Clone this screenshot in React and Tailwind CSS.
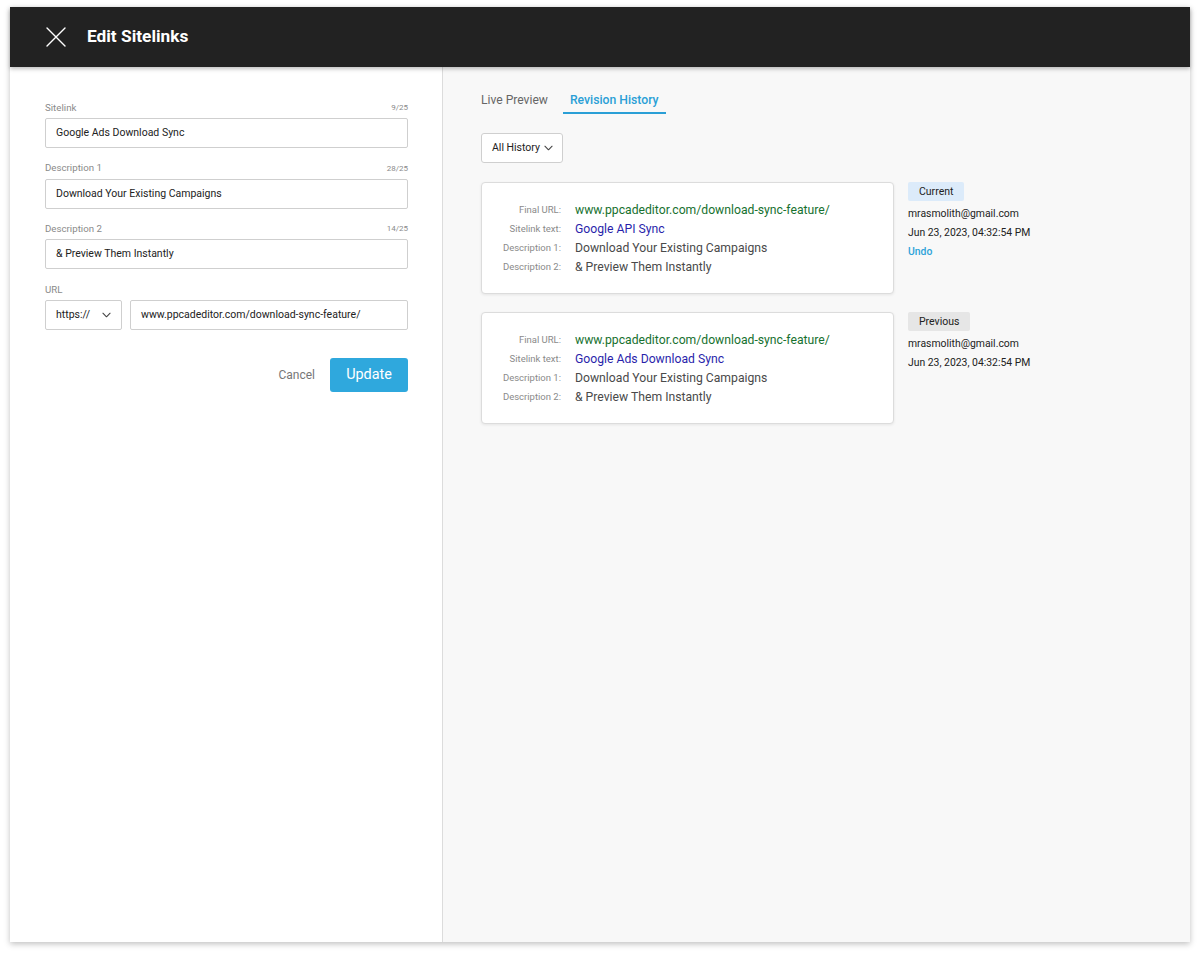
import React from "react";

const font = { fontFamily: "Roboto, 'Noto Sans', Arial, sans-serif" };

function Chevron({ className = "" }) {
  return (
    <svg className={className} width="9" height="6" viewBox="0 0 10 6" fill="none">
      <path d="M1 1l4 4 4-4" stroke="#444" strokeWidth="1.2" strokeLinecap="round" strokeLinejoin="round" />
    </svg>
  );
}

function Field({ label, count, value }) {
  return (
    <div className="flex flex-col">
      <div className="flex justify-between items-center h-[14px] mb-[3px]">
        <span className="text-[9.7px] text-[#8a8a8a]">{label}</span>
        {count && <span className="text-[8px] text-[#8a8a8a]">{count}</span>}
      </div>
      <div className="h-[30px] border border-[#cfcfcf] rounded-[2px] flex items-center px-[10px] text-[10.5px] text-[#222]">
        {value}
      </div>
    </div>
  );
}

function Card({ sitelink }) {
  const rows = [
    ["Final URL:", "www.ppcadeditor.com/download-sync-feature/", "text-[#17712f]"],
    ["Sitelink text:", sitelink, "text-[#2a1fab]"],
    ["Description 1:", "Download Your Existing Campaigns", "text-[#4a4a4a]"],
    ["Description 2:", "& Preview Them Instantly", "text-[#4a4a4a]"],
  ];
  return (
    <div className="w-[413px] h-[112px] bg-white border border-[#dcdcdc] rounded-[4px] shadow-[0_1px_3px_rgba(0,0,0,0.08)] pt-[18px] pl-[15px]">
      {rows.map(([l, v, c]) => (
        <div key={l} className="flex items-center h-[19px]">
          <span className="w-[64px] text-right text-[9.5px] text-[#8a8a8a]">{l}</span>
          <span className={`ml-[14px] text-[12.2px] ${c}`}>{v}</span>
        </div>
      ))}
    </div>
  );
}

function Meta({ badge, badgeCls, undo }) {
  return (
    <div className="ml-[14px] flex flex-col items-start">
      <span className={`h-[19px] px-[11px] flex items-center rounded-[2px] text-[10.5px] text-[#222] ${badgeCls}`}>{badge}</span>
      <span className="mt-[4px] h-[18px] flex items-center text-[10.4px] text-[#222]">mrasmolith@gmail.com</span>
      <span className="mt-[1px] h-[18px] flex items-center text-[10.4px] text-[#222]">Jun 23, 2023, 04:32:54 PM</span>
      {undo && <span className="mt-[1px] h-[18px] flex items-center text-[10.4px] font-medium text-[#2ea3d9]">Undo</span>}
    </div>
  );
}

export default function App() {
  return (
    <div className="w-[1200px] h-[956px] bg-white pt-[7px] pl-[10px]" style={font}>
      <div className="w-[1180px] h-[935px] flex flex-col shadow-[0_2px_6px_rgba(0,0,0,0.25)] bg-white">
        <div className="h-[60px] bg-[#222222] flex items-center pl-[36px] shadow-[0_2px_4px_rgba(0,0,0,0.25)] relative z-10">
          <svg width="20" height="20" viewBox="0 0 20 20" fill="none">
            <path d="M1 1l18 18M19 1L1 19" stroke="#fff" strokeWidth="1.4" strokeLinecap="round" />
          </svg>
          <span className="ml-[21px] text-white text-[17.3px] font-bold">Edit Sitelinks</span>
        </div>
        <div className="flex flex-1">
          <div className="w-[433px] bg-white border-r border-[#dcdcdc] pt-[34px] pl-[35px] pr-[34px]">
            <div className="flex flex-col gap-[13.67px]">
              <Field label="Sitelink" count="9/25" value="Google Ads Download Sync" />
              <Field label="Description 1" count="28/25" value="Download Your Existing Campaigns" />
              <Field label="Description 2" count="14/25" value="& Preview Them Instantly" />
              <div className="flex flex-col">
                <div className="flex items-center h-[14px] mb-[3px]">
                  <span className="text-[9.7px] text-[#8a8a8a]">URL</span>
                </div>
                <div className="flex gap-[8px]">
                  <div className="w-[77px] h-[30px] border border-[#cfcfcf] rounded-[2px] flex items-center justify-between pl-[10px] pr-[10px] text-[10.5px] text-[#222]">
                    <span>https://</span>
                    <Chevron />
                  </div>
                  <div className="flex-1 h-[30px] border border-[#cfcfcf] rounded-[2px] flex items-center px-[10px] text-[10.5px] text-[#222]">
                    www.ppcadeditor.com/download-sync-feature/
                  </div>
                </div>
              </div>
            </div>
            <div className="flex justify-end items-center mt-[28px]">
              <span className="text-[12px] text-[#777]">Cancel</span>
              <span className="ml-[15px] w-[78px] h-[34px] rounded-[3px] bg-[#2fa8dd] text-white text-[14.4px] flex items-center justify-center">Update</span>
            </div>
          </div>
          <div className="flex-1 bg-[#f8f8f8] pl-[38px] pt-[24px]">
            <div className="flex items-end">
              <span className="h-[23px] text-[12.1px] text-[#666] leading-[18px]">Live Preview</span>
              <span className="ml-[15px] px-[7px] h-[23px] text-[12.2px] font-medium text-[#2a9fd6] leading-[18px] border-b-2 border-[#2a9fd6]">Revision History</span>
            </div>
            <div className="mt-[19px] w-[82px] h-[30px] bg-white border border-[#cfcfcf] rounded-[3px] flex items-center justify-between pl-[10px] pr-[9px] text-[10.5px] text-[#222]">
              <span>All History</span>
              <Chevron />
            </div>
            <div className="mt-[19px] flex flex-col gap-[18px]">
              <div className="flex items-start">
                <Card sitelink="Google API Sync" />
                <Meta badge="Current" badgeCls="bg-[#dcebfa]" undo />
              </div>
              <div className="flex items-start">
                <Card sitelink="Google Ads Download Sync" />
                <Meta badge="Previous" badgeCls="bg-[#e6e6e6]" />
              </div>
            </div>
          </div>
        </div>
      </div>
    </div>
  );
}
